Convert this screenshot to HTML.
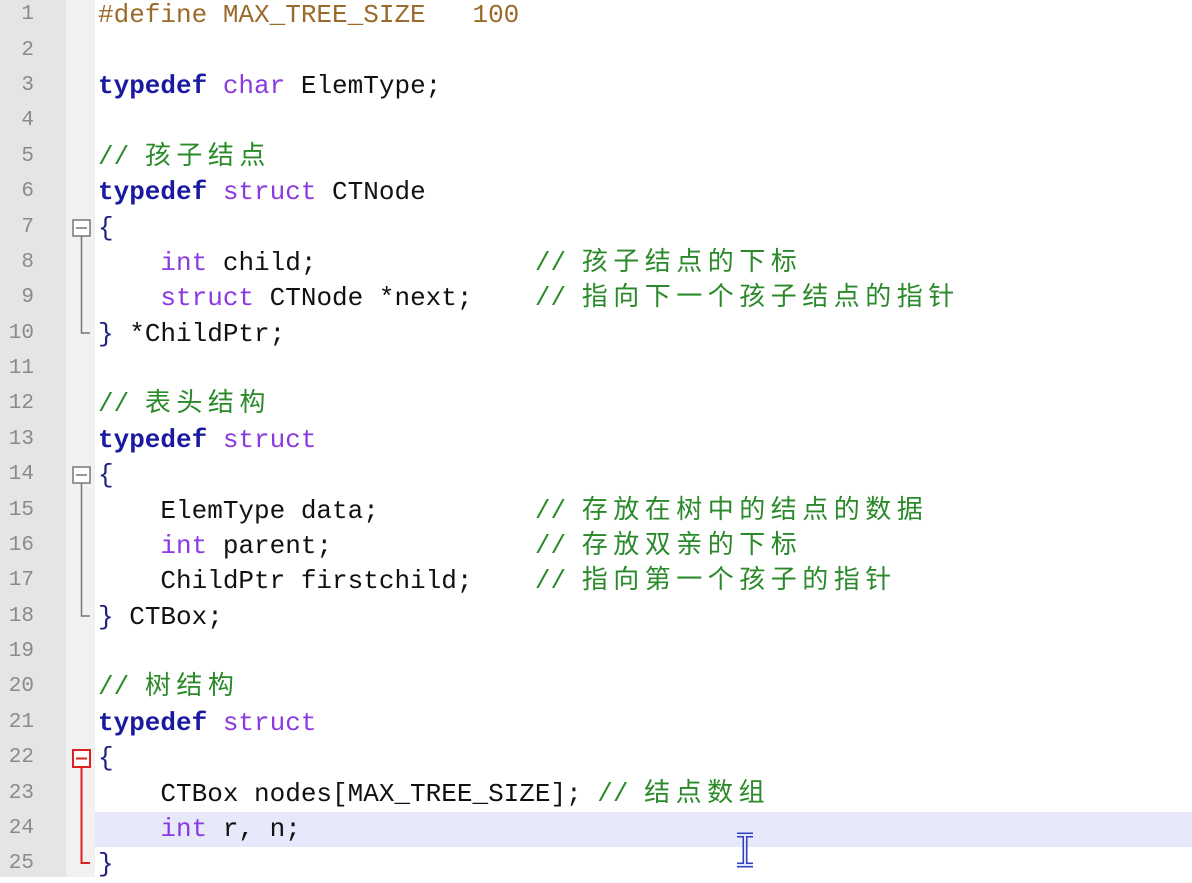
<!DOCTYPE html>
<html><head><meta charset="utf-8"><style>
body{margin:0;width:1192px;height:877px;overflow:hidden;background:#fff;position:relative;font-family:"Liberation Mono","Noto Sans CJK SC",monospace}
.g1{position:absolute;left:0;top:0;width:66px;height:877px;background:#e5e5e5}
.g2{position:absolute;left:66px;top:0;width:29px;height:877px;background:#f1f1f1}
.hl{position:absolute;left:95px;top:812px;width:1097px;height:35px;background:#e8e8fb}
.ln{position:absolute;left:0;width:34px;text-align:right;font-size:21px;color:#8a8a8a;line-height:35.375px}
.code{position:absolute;left:98px;top:-1.7px;font-size:26px;color:#111}
.code div{height:35.375px;line-height:35.375px;white-space:pre}
.kw{color:#1a1aa0;font-weight:bold}.ty{color:#8a3ae0}.pp{color:#9a6a2a}.cm{color:#2a8a2a}.br{color:#202080}
.c{font-family:"Noto Sans CJK SC",sans-serif;letter-spacing:5.5px;line-height:0}
</style></head><body>
<div class="g1"></div><div class="g2"></div><div class="hl"></div>
<div class="ln" style="top:-2.7px">1<br>2<br>3<br>4<br>5<br>6<br>7<br>8<br>9<br>10<br>11<br>12<br>13<br>14<br>15<br>16<br>17<br>18<br>19<br>20<br>21<br>22<br>23<br>24<br>25</div>
<svg style="position:absolute;left:0;top:0" width="120" height="877">
<g stroke="#777" stroke-width="1.5" fill="#fff">
<rect x="73" y="220" width="17" height="16"/><line x1="76" y1="228" x2="87" y2="228"/>
<polyline fill="none" points="81.5,236 81.5,333 90,333"/>
<rect x="73" y="467" width="17" height="16"/><line x1="76" y1="475" x2="87" y2="475"/>
<polyline fill="none" points="81.5,483 81.5,616 90,616"/>
</g>
<g stroke="#e02020" stroke-width="2" fill="#fff">
<rect x="73" y="750" width="17" height="17"/><line x1="76" y1="758.5" x2="87" y2="758.5"/>
<polyline fill="none" points="81.5,767 81.5,863 90,863"/>
</g>
</svg>
<div class="code"><div><span class="pp">#define MAX_TREE_SIZE   100</span></div><div> </div><div><span class="kw">typedef</span> <span class="ty">char</span> ElemType;</div><div> </div><div><span class="cm">// <span class="c">孩子结点</span></span></div><div><span class="kw">typedef</span> <span class="ty">struct</span> CTNode</div><div><span class="br">{</span></div><div>    <span class="ty">int</span> child;              <span class="cm">// <span class="c">孩子结点的下标</span></span></div><div>    <span class="ty">struct</span> CTNode *next;    <span class="cm">// <span class="c">指向下一个孩子结点的指针</span></span></div><div><span class="br">}</span> *ChildPtr;</div><div> </div><div><span class="cm">// <span class="c">表头结构</span></span></div><div><span class="kw">typedef</span> <span class="ty">struct</span></div><div><span class="br">{</span></div><div>    ElemType data;          <span class="cm">// <span class="c">存放在树中的结点的数据</span></span></div><div>    <span class="ty">int</span> parent;             <span class="cm">// <span class="c">存放双亲的下标</span></span></div><div>    ChildPtr firstchild;    <span class="cm">// <span class="c">指向第一个孩子的指针</span></span></div><div><span class="br">}</span> CTBox;</div><div> </div><div><span class="cm">// <span class="c">树结构</span></span></div><div><span class="kw">typedef</span> <span class="ty">struct</span></div><div><span class="br">{</span></div><div>    CTBox nodes[MAX_TREE_SIZE]; <span class="cm">// <span class="c">结点数组</span></span></div><div>    <span class="ty">int</span> r, n;</div><div><span class="br">}</span></div></div>
<svg style="position:absolute;left:733px;top:832px" width="24" height="40"><path d="M4 3h16M4 33h16M12 3v30" stroke="#3040c0" stroke-width="5" fill="none"/><path d="M4 3h16M4 33h16M12 3v30" stroke="#e0e8ff" stroke-width="2" fill="none"/></svg>
</body></html>
